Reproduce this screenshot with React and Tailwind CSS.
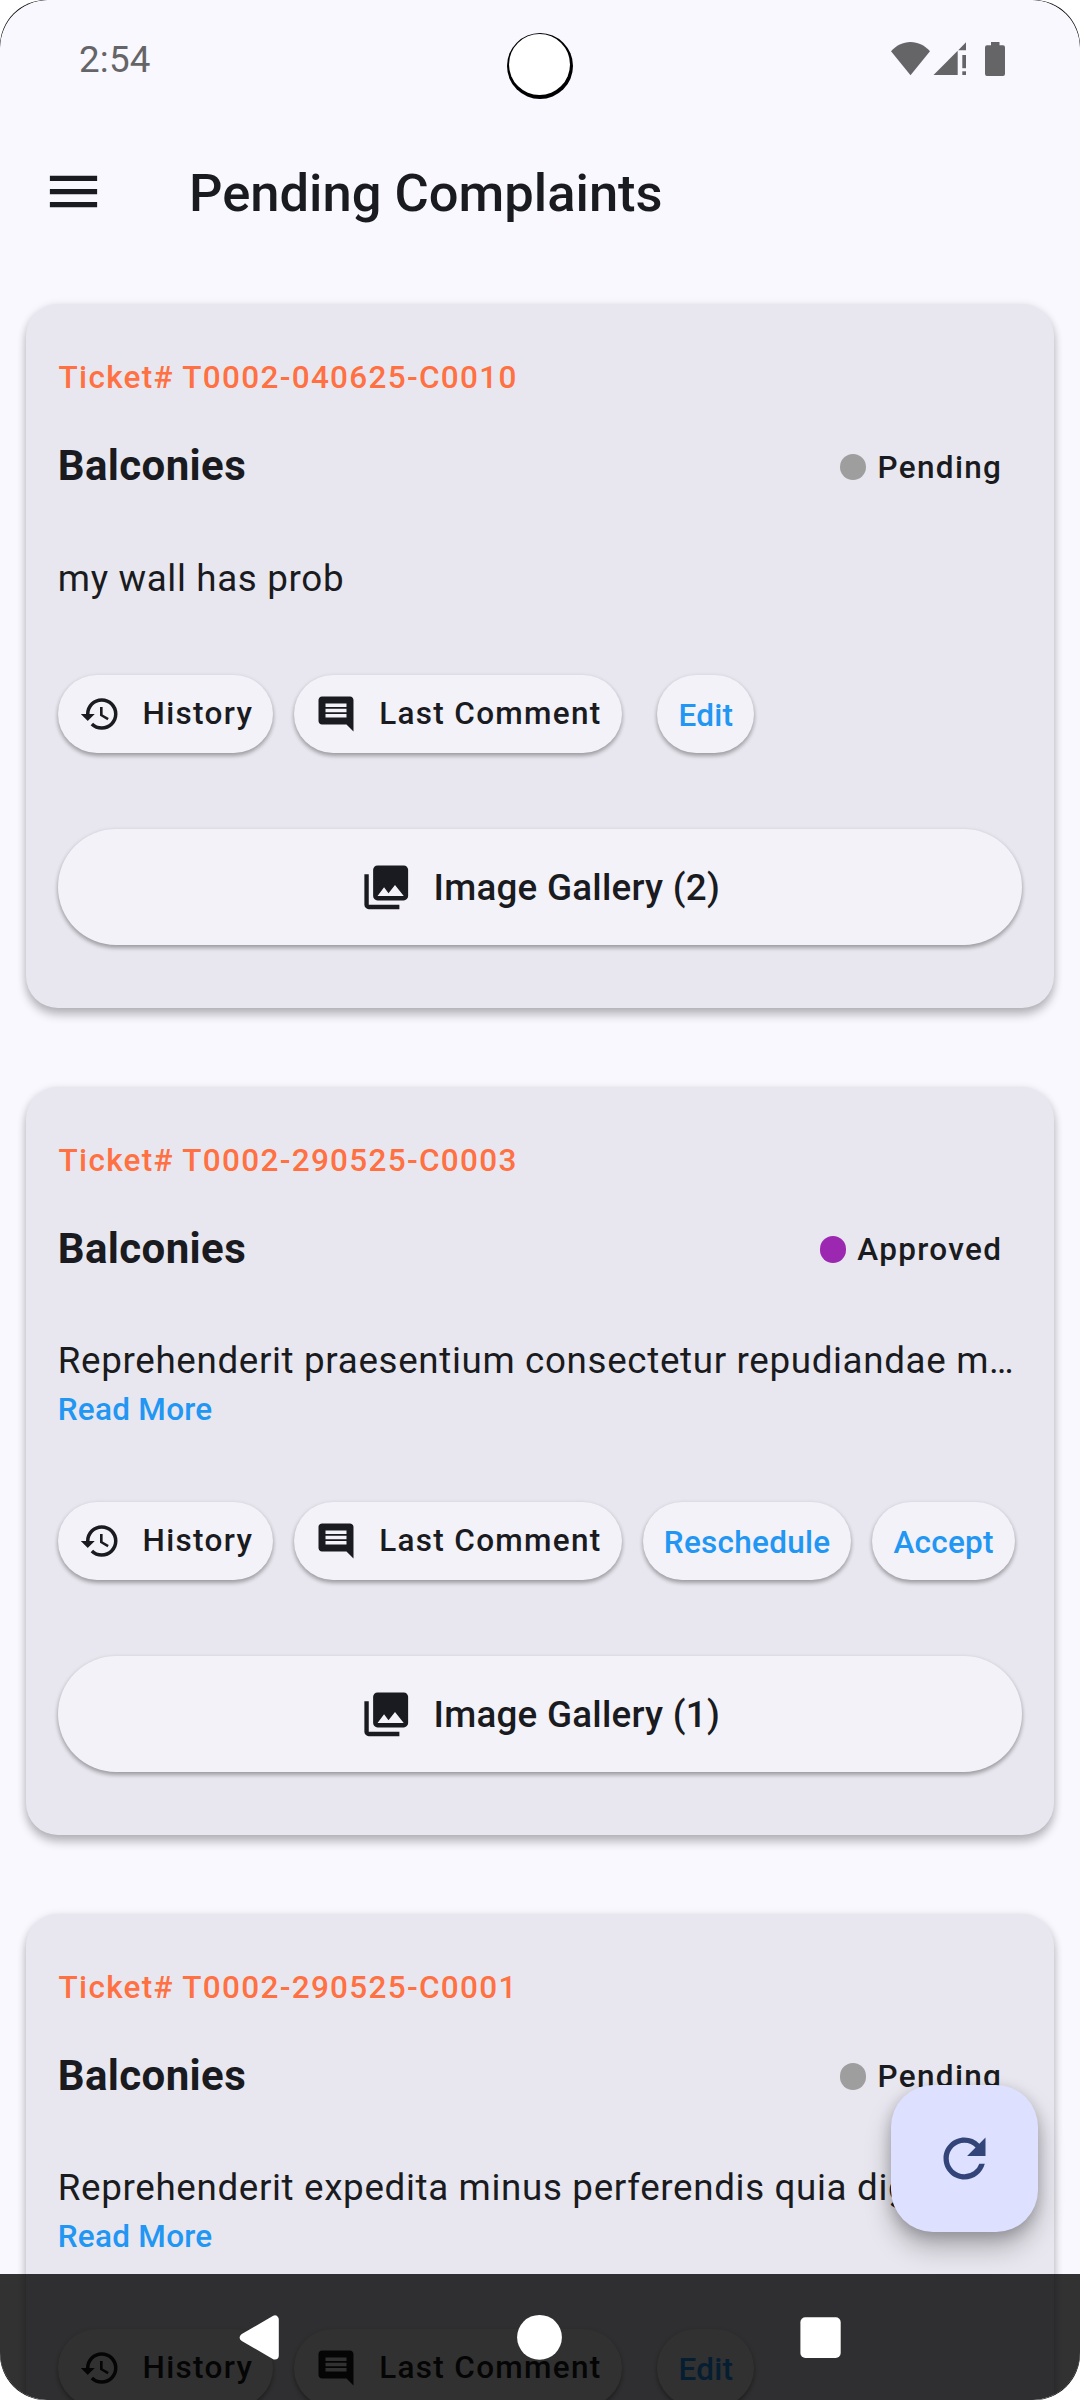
import React from "react";
import { MdMenu, MdHistory, MdComment, MdPhotoLibrary, MdRefresh } from "react-icons/md";

const complaints = [
  {
    ticket: "T0002-040625-C0010",
    status: "Pending",
    dot: "bg-[#9e9e9e]",
    text: "my wall has prob",
    readMore: false,
    actions: ["Edit"],
    images: 2,
  },
  {
    ticket: "T0002-290525-C0003",
    status: "Approved",
    dot: "bg-[#9c27b0]",
    text: "Reprehenderit praesentium consectetur repudiandae m…",
    readMore: true,
    actions: ["Reschedule", "Accept"],
    images: 1,
  },
  {
    ticket: "T0002-290525-C0001",
    status: "Pending",
    dot: "bg-[#9e9e9e]",
    text: "Reprehenderit expedita minus perferendis quia dig…",
    readMore: true,
    actions: ["Edit"],
    images: 0,
  },
];

const pill =
  "flex shrink-0 items-center rounded-full bg-[#f3f2f9] shadow-[0_3px_4px_rgba(0,0,0,0.28),0_1px_5px_rgba(0,0,0,0.1)]";

function StatusBar() {
  return (
    <div className="flex h-[120px] items-start justify-between pl-[79px] pr-[74px] text-[#656567]">
      <span className="mt-[38px] text-[36.75px] leading-[43px] tracking-[0.2px]">2:54</span>
      <svg className="mt-[42px] h-[35px] w-[115px]" viewBox="0 0 115 35" fill="currentColor">
        <path d="M0 9.3C5 3.6 12 0 19.5 0S34 3.6 39 9.3L19.5 33.2Z" />
        <path d="M42.5 33 66.7 8.8V33Z" />
        <path d="M67.2 8.3 75 .3V8.3Z" />
        <rect x="71.3" y="13" width="3.7" height="13.2" />
        <rect x="71.3" y="29.3" width="3.7" height="3.7" />
        <path d="M100 0H108.5V3.3H112Q114 3.3 114 5.5V31.7Q114 34 112 34H96Q94 34 94 31.7V5.5Q94 3.3 96 3.3H100Z" />
      </svg>
    </div>
  );
}

function Complaint({ item }) {
  return (
    <article className="rounded-[32px] bg-[#e8e7ef] px-[31.5px] pt-[53px] pb-[63px] shadow-[0_7px_10px_rgba(0,0,0,0.24),0_1px_8px_rgba(0,0,0,0.1)]">
      <p className="pl-[0.8px] text-[31.5px] leading-[42px] font-medium tracking-[1.3125px] text-[#ff7043]">
        Ticket# {item.ticket}
      </p>
      <div className="mt-[42px] flex h-[52px] items-center justify-between pr-5">
        <h2 className="pb-[3px] text-[42px] leading-[49px] font-bold tracking-[0.39px]">Balconies</h2>
        <div className="flex items-center gap-[11.5px]">
          <span className={"size-[26.25px] rounded-full " + item.dot} />
          <span className="pt-px text-[31.5px] leading-[42px] font-medium tracking-[1.3125px]">{item.status}</span>
        </div>
      </div>
      <p className="mt-[59.6px] text-[36.75px] leading-[52px] tracking-[0.656px] whitespace-nowrap">{item.text}</p>
      {item.readMore && (
        <p className="pt-[1.2px] text-[31.5px] leading-[43.2px] font-medium tracking-[0.2625px] text-[#2196f3]">
          Read More
        </p>
      )}
      <div className="mt-[70.4px] flex h-[78px] gap-[21px] text-[31.5px] leading-[42px] font-medium">
        <button className={pill + " gap-[21px] px-[21px] tracking-[1.3125px]"}>
          <MdHistory className="size-[42px]" />
          <span className="-mr-[0.8px] ml-[0.8px]">History</span>
        </button>
        <button className={pill + " gap-[21px] px-[21px] tracking-[1.3125px]"}>
          <MdComment className="size-[42px]" />
          <span className="-mr-[0.8px] ml-[0.8px]">Last Comment</span>
        </button>
        {item.actions.map((action) => (
          <button
            key={action}
            className={
              pill + " px-[21px] pt-[4px] tracking-[0.2625px] text-[#2196f3]" + (action === "Edit" ? " ml-[14.6px]" : "")
            }
          >
            {action}
          </button>
        ))}
      </div>
      {item.images > 0 && (
        <button
          className={pill + " mt-[76px] h-[116px] w-full justify-center gap-[21px] text-[36.75px] leading-[52px] font-medium tracking-[0.2625px]"}
        >
          <MdPhotoLibrary className="size-[52.5px]" />
          <span className="pt-[2px]">Image Gallery ({item.images})</span>
        </button>
      )}
    </article>
  );
}

function NavigationBar() {
  return (
    <nav className="absolute inset-x-0 bottom-0 flex h-[126px] items-start justify-center gap-[235px] bg-black/80 pt-[40px] text-white">
      <svg className="size-[46px]" viewBox="0 0 46 46" fill="currentColor" stroke="currentColor" strokeWidth="8" strokeLinejoin="round">
        <path d="M38.8 5.5V41.5L7.8 23.5Z" />
      </svg>
      <svg className="size-[46px]" viewBox="0 0 46 46" fill="currentColor">
        <circle cx="22.5" cy="23.3" r="22.4" />
      </svg>
      <svg className="size-[46px]" viewBox="0 0 46 46" fill="currentColor">
        <rect x="2.4" y="3.3" width="40.3" height="40.6" rx="5" />
      </svg>
    </nav>
  );
}

export default function App() {
  return (
    <div className="h-[2400px] w-[1080px] overflow-hidden bg-white font-[Roboto,sans-serif] text-[#1a1b20]">
      <div className="h-full overflow-hidden rounded-[46px] bg-black">
        <main className="relative h-full overflow-hidden rounded-[48px] bg-[#f9f8ff]">
          <StatusBar />
          <div className="absolute top-[33px] left-[507px] h-[66px] w-[66px] rounded-full bg-black pt-[1.3px] pl-[2px]">
            <div className="size-[61px] rounded-full bg-white" />
          </div>
          <header className="flex h-[144px] items-center pl-[42px]">
            <MdMenu className="mb-px size-[63px]" />
            <h1 className="ml-[84px] pt-[2px] text-[52.5px] leading-[62px] font-medium">Pending Complaints</h1>
          </header>
          <section className="flex flex-col gap-[78.6px] px-[26.25px] pt-[40px]">
            {complaints.map((item) => (
              <Complaint key={item.ticket} item={item} />
            ))}
          </section>
          <button className="absolute top-[2085px] left-[891px] flex size-[147px] items-center justify-center rounded-[42px] bg-[#dde1ff] text-[#334478] shadow-[0_16px_26px_rgba(0,0,0,0.25),0_4px_14px_rgba(0,0,0,0.2)]">
            <MdRefresh className="size-[63px]" />
          </button>
          <NavigationBar />
        </main>
      </div>
    </div>
  );
}
